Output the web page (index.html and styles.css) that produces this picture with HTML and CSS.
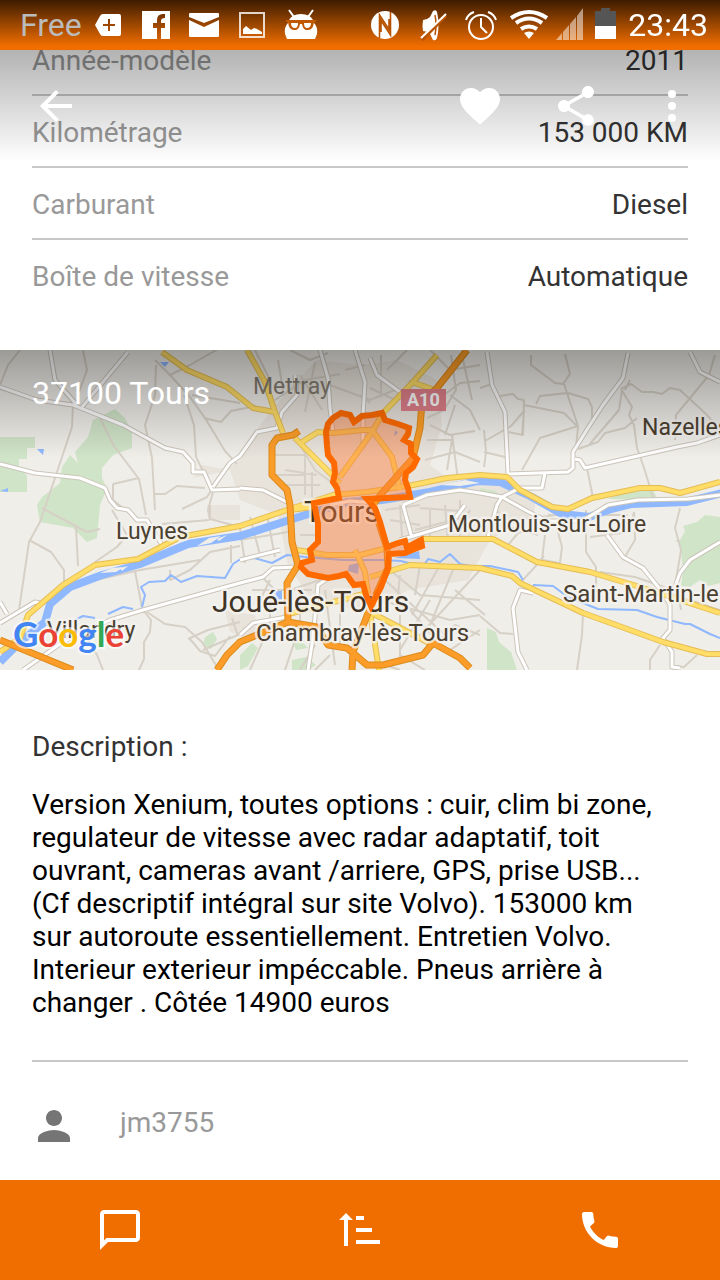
FILE: index.html
```html
<!DOCTYPE html>
<html lang="fr">

<head>
    <meta charset="UTF-8">
    <meta name="viewport" content="width=device-width, initial-scale=1.0">
    <title>Annonce - 37100 Tours</title>
    <link rel="stylesheet" href="styles.css">
</head>

<body>
    <div class="overlay">
        <div class="status-bar">
            <span class="carrier">Free</span>
            <svg class="status-icon" viewBox="0 0 48 50"><path fill="#fff" fill-rule="evenodd" d="M11 25l5-9q1-2 3-2h16q2 0 2 2v18q0 2-2 2H19q-2 0-3-2zM24 19v5h-5v2h5v5h2v-5h5v-2h-5v-5z"/></svg>
            <svg class="status-icon" viewBox="0 0 48 50"><path fill="#fff" fill-rule="evenodd" d="M10 11h28v28H10zM25 39h4V28h4v-5h-4v-2q0-3 4-3v-4h-2q-6 0-6 6v3h-4v5h4z"/></svg>
            <svg class="status-icon" viewBox="0 0 48 50"><path fill="#fff" d="M10 13h28q1 0 1 1v3l-15 6-15-6v-3q0-1 1-1zM9 20l15 7 15-7v16q0 1-1 1H10q-1 0-1-1z"/></svg>
            <svg class="status-icon" viewBox="0 0 48 50"><path fill="none" stroke="#fff" stroke-opacity=".8" stroke-width="2" d="M12 13h24v24H12z"/><path fill="#fff" d="M15 34v-5l3-3 5 4 3-2 3 1 5 3v2z"/></svg>
            <svg class="status-icon" viewBox="0 0 48 50"><path fill="none" stroke="#fff" stroke-width="2" d="M13 10l5 7M37 10l-5 7"/><path fill="#fff" d="M13 20q3-6 12-6t12 6l1 3q4 4 3 11l-2 5H11l-2-5q-1-7 3-11z"/><path fill="#c05800" d="M10 20h30v2h-2q-1 9-7 8-4 0-5-6h-2q-1 6-5 6-6 1-7-8h-2z"/><path fill="#fff" d="M15 23h7q0 5-3 5-4 0-4-5zM28 23h7q0 5-4 5-3 0-3-5z"/></svg>
            <div class="status-right">
                <svg class="status-icon" viewBox="0 0 48 50"><circle cx="25" cy="25" r="14" fill="#fff"/><path fill="none" stroke="#b75200" stroke-width="1.600" d="M19.500 38V15l9.500 14.500V19M30.500 12v23L21 20.500V32"/></svg>
                <svg class="status-icon" viewBox="0 0 48 50"><path fill="#fff" d="M15 20q4 0 7-3l3-6q3-2 4 1 3 13 0 26-1 3-4 2l-3-6q-3-3-7-3-1-5 0-11z"/><path stroke="#b85200" stroke-width="1.500" d="M27 15q2 10 0 20" fill="none"/><path stroke="#b85200" stroke-width="3" d="M14 40l24-24"/><path stroke="#fff" stroke-width="2" d="M13 38l25-24"/></svg>
                <svg class="status-icon" viewBox="0 0 48 50"><g fill="none" stroke="#fff" stroke-width="2"><circle cx="25" cy="27" r="12"/><path d="M25 18v9l6 6M10 20q2-6 8-8M32 12q6 2 8 8"/></g></svg>
                <svg class="status-icon" viewBox="0 0 48 50"><g fill="none" stroke="#fff" stroke-width="4"><path d="M7 18q18-12 36 0"/><path d="M12 23q13-9 26 0"/><path d="M17 29q8-5 16 0"/></g><path fill="#fff" d="M20 33q5-3 10 0l-5 6z"/></svg>
                <svg class="signal-icon" viewBox="0 0 32 50"><path fill="#fff" fill-opacity=".5" d="M4 40l6-7v7zM11 32l6-7v15h-6zM18 24l6-7v23h-6zM25 16l6-8v32h-6z"/></svg>
                <svg class="battery-icon" viewBox="0 0 26 50"><path fill="#555" d="M8 8h9v3h6v15H2V11h6z"/><path fill="#fff" d="M2 26h21v13H2z"/></svg>
                <time>23:43</time>
            </div>
        </div>
        <nav class="toolbar">
            <button class="icon-button" aria-label="Retour"><svg viewBox="0 0 24 24"><path d="M20 11H7.8l5.6-5.6L12 4l-8 8 8 8 1.4-1.4L7.8 13H20z"/></svg></button>
            <div class="toolbar-actions">
                <button class="icon-button" aria-label="Ajouter aux favoris"><svg viewBox="0 0 24 24"><path d="M12 21.35l-1.45-1.32C5.4 15.36 2 12.28 2 8.5 2 5.42 4.42 3 7.5 3c1.74 0 3.41.81 4.5 2.09C13.09 3.81 14.76 3 16.5 3 19.58 3 22 5.42 22 8.5c0 3.78-3.4 6.86-8.55 11.54z"/></svg></button>
                <button class="icon-button" aria-label="Partager"><svg viewBox="0 0 24 24"><path d="M18 16.08c-.76 0-1.44.3-1.96.77L8.91 12.7c.05-.23.09-.46.09-.7s-.04-.47-.09-.7l7.05-4.11c.54.5 1.25.81 2.04.81 1.66 0 3-1.34 3-3s-1.34-3-3-3-3 1.34-3 3c0 .24.04.47.09.7L8.04 9.81C7.5 9.31 6.79 9 6 9c-1.66 0-3 1.34-3 3s1.34 3 3 3c.79 0 1.5-.31 2.04-.81l7.12 4.16c-.05.21-.08.43-.08.65 0 1.61 1.31 2.92 2.92 2.92s2.92-1.31 2.92-2.92-1.31-2.92-2.92-2.92z"/></svg></button>
                <button class="icon-button" aria-label="Plus d'options"><svg viewBox="0 0 24 24"><circle cx="12" cy="6" r="2"/><circle cx="12" cy="12" r="2"/><circle cx="12" cy="18" r="2"/></svg></button>
            </div>
        </nav>
    </div>

    <main>
        <dl class="specs">
            <div class="spec"><dt>Année-modèle</dt><dd>2011</dd></div>
            <div class="spec"><dt>Kilométrage</dt><dd>153 000 KM</dd></div>
            <div class="spec"><dt>Carburant</dt><dd>Diesel</dd></div>
            <div class="spec"><dt>Boîte de vitesse</dt><dd>Automatique</dd></div>
        </dl>

        <section class="map">
            <svg class="map-canvas" viewBox="0 350 720 320" preserveAspectRatio="xMidYMid slice">
                <rect class="land" y="350" width="720" height="320"/>

                <!-- built-up areas -->
                <path class="urban" d="M193 478l30-6 17-12 20-35 32-40 25-25 45 5 35-5 40 20 5 45-12 40 20 15 60 5 25 10v15l-45 30-22 40-60 10-40 25-60-20-20-30-10-50-38-15-10-30-27-5zM207 505h33v15h-30zM505 505h22l8 14h-32zM225 610l30 5 5 25-30-8z"/>

                <!-- woods -->
                <path class="wood" d="M0 437h35v11h-8v11h-8v10l8 6v17H0zM115 409l10 9 7 14v16l-19 7-11 13v10l5 10-7 17-3 33-10 4-14-14-33-6-3-17 5-8 18-14 2-16 8-12 8 8-3-11 13-15 5-17zM697 522l8-7 15 2v66l-12 3-8-6-10 7-9-1 2-16-3-26-5-4h5l5-9-2-5zM487 628l9 4 3 10 12 10 6 18h-30zM205 637l8-5 4 7-6 10-8-4zM240 655l12-12 6 5-10 18-8 4zM290 637l10 3 8 8-12 2zM292 660l14-3 10 8-8 5h-16zM480 488l15 3 8 6-23-2zM607 499l20-7 26-2 5 10z"/>

                <!-- small roads -->
                <g class="lane">
                    <path d="M0 385l8-20 12-15M83 350l4 20-8 22M73 405l-1 22-14 42-18 53-11 20-10 68M100 418l14 28 25 33 7 36M156 365l-1 30-10 30 7 33 3 52M155 360l15 15 20 22 15 21 20 33 12 13M170 375l20-10 35-20M204 418l17 4 10-11 25-5M184 395l10 30 2 32 10 20M192 395l48 8"/>
                    <path d="M113 484l26-6M113 484v16l15 12M155 494h10l12-8 28 2M182 509l25-12 5-8M213 492l-5 18 2 10M42 508l45 24 13-3M76 526l2 40M29 540l22 12 13 18v14M95 562l22-15 10-12-15-25M162 524l47-4M210 505v14l30 8M135 571l8 42M52 605l12-12 18-10 58-13 60-10M170 570v10l20-10 20-18 30-6M231 545v18"/>
                    <path d="M143 610l8 10-1 12-6 10v17l-5 11M147 612l18 12 20 3 17 15 15 25M188 639l20-9 32-8M203 650l37-16M82 630l15 25 6 15M190 639l10 12 15 5 15-20M232 618l6 18"/>
                    <path d="M255 350l15 30M290 350l20 10 18-7M275 400l30-20 35-6M283 390l-5-30M300 375l22 35M315 362l-10 50M330 385l40 15 25-10M381 355v40M345 370l20-5M387 370l20-20M395 400l-25-12M410 380l-5 20 15 10M360 395l10 8M440 398l20-15 20-2M427 418l17-8 12-20-5-35M450 395l20 15 10 20M430 425l20 10 25-4M427 440h25l-5 30M455 405l-10 30M425 460l30-8 25 10M452 435l6 45M430 350l20 20 30-5M462 355l10 45"/>
                    <path d="M480 388l12-4M500 396l13-2 5 5 6 1-1 35-15-3M485 441l26-15 13-15-2 24M524 405l40 8 14 14-2 20M522 470l18-32 38-12M531 355v10l24 18 8 1 7-10-5-20M564 384l14 42M536 404l4-8 28-3 20 6 4 8v12M621 389l11 18-3 8 5 10 3 23 6 17 12 38M621 389l10-5 11 8h11l9 2 8-6 10 2 25 23 15 16M622 390l-3 20-30 35M578 449l20-7 7-9 20-5 12-10M675 440l1-25 33-40 6-20M484 430l2 22-2 15M484 452l25 6M587 468l6 30M625 390l5-10"/>
                    <path d="M545 535l-3 25 18 3 2-16-4-15M508 545l10-12 22-6M586 510v42l10 15v20l-5 13M590 537l40-5 4-20M634 512l1 28-12 20M680 508l-5 20 6 22-5 30 5 30M520 583l14-15 10-12M480 616l20 17 13 1M583 613l-1 22-5 35M600 572l35 5 35 12M660 645l-10 15v10M697 655l-13 12-10-1M500 520l35-2 20-3M495 505l8 20 35 10M548 515h80"/>
                    <path d="M275 455h30v20h-30M300 445l15 25M285 470l32 5M285 485h35M305 470v25M312 472v25M315 470l20 15M297 520l20-8M300 535h17M280 510l-40 18 5 35M250 517l10 38M267 515l8 42M240 540l48-8M385 510l35-5M390 520l30 5M400 505l2 32M420 508l40 3M415 530l50-13M430 510v29M445 505l3 35M460 500v42M470 510l-10 20M390 570l30 25 60 5M400 575l-3 30M420 565l-5 30M440 565l-28 50M455 565l-25 60M480 570l-60 65M385 580l60 55M380 600l70 20 30-5M400 615v45M410 610l30 35M430 600l-30 50M455 590l30 25M260 575l20 20M252 590h60M260 600l10-20M270 595v35M290 590l30-10M300 590v35M325 590l10 75M340 590v60M300 625l-15 45M270 625l-20 45M320 600h50M315 645l-15 25M330 655l-15 15M385 665l15 5M400 655l25 15M440 640l15-15 25 10M450 650l30-20"/>
                </g>

                <!-- rivers -->
                <path class="river river-wide" d="M0 662l20-20 25-20 5-18 20-17 32-12 38-11 48-20 52-8 62-20 45-14 35-2 48-8 47-11 23 1 30 14 32 18 27 3 22-8 20-5 55-2 57-14"/>
                <path class="river" d="M142 607l3-12-4-8 8-5 16-1 6-6 10 7 16-6 28 2 8-14 6-4 15-2 18 5 15-8 18 2 38 3h40l18 1 22 6 5-8 12 3 10-8 10 10 10 2h20l28 6 5 8M533 585l20 1 15 11 30 12 39 1 20 7 28 7h5l20 10 10 4M75 620l8-4 12 2M108 614l15-7 10 2"/>
                <path class="water" d="M37 449h7l-1 6zM0 491l8-3v4zM160 362h9l-4 5zM276 591h6v9h-7zM349 565l10-2-1 11-10-3zM394 558l25-7 1 8zM395 430l3 3-4 3z"/>
                <path class="island" d="M100 573l12-5 12-1-8 5zM120 568l8-2-6 5zM197 546l12-8 12-2-10 7zM217 539l10-4-8 6zM440 485l25-5 15 3-20 3z"/>

                <!-- white roads, cased then filled -->
                <defs>
                    <g id="streets">
                        <path d="M0 387l37 13 36 5 50 20 42 23 18 4 10 11v9h11l8 18 28-1M213 487l17-24 10-7 17-24 20-4 5-16 15-17-2-20M50 350l5 30 22 25M128 352l-46 55M0 464l35 9 45 5 25 10 5 12 7 8 11 2 9 10h10l15 25"/>
                        <path d="M320 350l8 28 2 30 3 25M355 350l10 32-2 33v32M370 358l7 17 23 17 28 7M240 488l23 2 24 12M403 505l24-10 33-5 20 3 22 4 25 14 20 10h35l26-16 30-5 50-1 55-7M403 505l9 33M400 540l50-15 15-20M330 505l20-4 25 2"/>
                        <path d="M487 352l5 33 13 27 3 62 60-2 5-4v-16l15-24 15-23 20-27 5-25M575 459l5 1 5 8 92-21 20-4 23-8M690 352l10 20 20 10M545 473l-3 15h-22l-18 9-5 8-9 32M607 535l16 22 20 11 20 25 7 12v25l-7 8 9 14v15l8 1M673 592l7-19 10-13 30-18M533 593l-13-3-7 18 5 44 9 18M670 595l50 17"/>
                        <path d="M0 623l35-21 5 1M0 602l7 12M23 670l40-28 47-22 33-10 97-27 23-6 10-9 25-1M240 635l13-12 34-6M308 670l5-32 5-53 12-8M240 560l40-10"/>
                    </g>
                    <g id="avenues">
                        <path d="M162 352l25 18 40 17 26 21 22 4 8 21M247 350l18 32 10 30M0 652l20-14 8-23 35-30 32-20 43-6 42-22 60-11 47-16 46-15 34-3 46-7 34-7 33-3 27 2 13 13 32 17 16 2 24-11 48-10h20l20 5 40-11"/>
                        <path d="M295 438l45 45M302 442l16-10 15 1 30-3h9l20 27 8 33M372 432l-32 45M372 432l11-19 30-31 24-27M412 382l20 7M422 539h71l44 23 53 10 50 15 80 26M370 577l40-12 70 3 32 8 8 7 63 30 80 29 44 12h13M285 615l82-22M297 550l30 5h33l27-7M355 550l10 22 5 36M370 612l9 58M370 612l63 33M290 510l23-3"/>
                    </g>
                    <g id="motorways">
                        <path d="M299 431l-6 4-16 3-5 7v30l15 15 3 15 2 37 6 23-11 18 1 39 29 5 11 18 19 3 20 17h16l40-10 10-12 27 15 10 10M288 622l-48 20-13 13-10 15M0 640l73 30M467 350l-30 38-15 14-2 26-7 30-30 34-10 13 14 43 1 20-18 40-17 44-1 18"/>
                    </g>
                </defs>
                <use href="#streets" class="street-case"/>
                <use href="#streets" class="street"/>
                <use href="#avenues" class="avenue-case"/>
                <use href="#avenues" class="avenue"/>
                <use href="#motorways" class="motorway-case"/>
                <use href="#motorways" class="motorway"/>

                <g class="town">
                    <text class="faded" x="253" y="394">Mettray</text>
                    <text x="642" y="435">Nazelles</text>
                    <text x="116" y="539">Luynes</text>
                    <text x="448" y="532">Montlouis-sur-Loire</text>
                    <text class="suburb" x="563" y="602">Saint-Martin-le</text>
                    <text x="47" y="638">Villandry</text>
                    <text class="suburb" x="256" y="641">Chambray-lès-Tours</text>
                    <text class="city" x="304" y="522">Tours</text>
                    <text class="city" x="212" y="612">Joué-lès-Tours</text>
                </g>

                <rect x="401" y="389" width="45" height="22" fill="#e0808a"/>
                <text class="road-number" x="407" y="406">A10</text>

                <!-- boundary of the postcode -->
                <path class="zone" d="M339 498L337 488 333 482 335 473 334 463 328 455 327 446 326 432 328 424 333 418 341 413 350 415 354 422 362 416 372 415 382 413 385 420 398 424 409 428 408 434 404 440 411 444 411 453 417 459 413 467 406 473 405 480 408 488 410 497 367 499 375 508 380 522 387 547 398 543 405 541 407 548 413 544 421 540 422 546 412 550 405 553 389 554 388 568 381 587 371 606 366 595 363 584 354 585 349 578 346 574 339 576 328 578 318 576 308 574 301 567 302 563 312 560 310 550 318 542 318 524 314 503z"/>

                <text class="google" x="13" y="647"><tspan fill="#4285f4">G</tspan><tspan fill="#ea4335">o</tspan><tspan fill="#fbbc05">o</tspan><tspan fill="#4285f4">g</tspan><tspan fill="#34a853">l</tspan><tspan fill="#ea4335">e</tspan></text>
            </svg>
            <h2 class="map-title">37100 Tours</h2>
        </section>

        <section class="description">
            <h2>Description :</h2>
            <p>Version Xenium, toutes options : cuir, clim bi zone, regulateur de vitesse avec radar adaptatif, toit ouvrant, cameras avant /arriere, GPS, prise USB... (Cf descriptif intégral sur site Volvo). 153000 km sur autoroute essentiellement. Entretien Volvo. Interieur exterieur impéccable. Pneus arrière à changer . Côtée 14900 euros</p>
        </section>

        <section class="seller">
            <svg class="avatar" viewBox="4 0 16 20"><path d="M12 12c2.21 0 4-1.79 4-4s-1.79-4-4-4-4 1.79-4 4 1.79 4 4 4zm0 2c-2.67 0-8 1.34-8 4v2h16v-2c0-2.66-5.33-4-8-4z"/></svg>
            <span>jm3755</span>
        </section>
    </main>

    <nav class="bottom-bar">
        <button class="icon-button" aria-label="Message"><svg viewBox="0 0 24 24"><path d="M20 2H4c-1.1 0-2 .9-2 2v18l4-4h14c1.1 0 2-.9 2-2V4c0-1.1-.9-2-2-2zm0 14H5.200L4 17.200V4h16z"/></svg></button>
        <button class="icon-button" aria-label="Trier"><svg viewBox="0 0 48 48"><path d="M3 14l7-7 7 7h-5v26H8V14zM20 10h8v4h-8zM20 22h16v4H20zM20 34h24v4H20z"/></svg></button>
        <button class="icon-button" aria-label="Appeler"><svg viewBox="0 0 24 24"><path d="M20.010 15.380c-1.230 0-2.420-.2-3.530-.56-.35-.12-.74-.03-1.010.24l-1.570 1.970c-2.830-1.350-5.480-3.900-6.890-6.830l1.950-1.660c.27-.28.35-.67.24-1.020-.37-1.110-.56-2.300-.56-3.530 0-.54-.45-.99-.99-.99H4.190C3.650 3 3 3.240 3 3.990 3 13.280 10.730 21 20.010 21c.71 0 .99-.63.99-1.180v-3.450c0-.54-.45-.99-.99-.99z"/></svg></button>
    </nav>
</body>

</html>
```
FILE: styles.css
```css
* {
    box-sizing: border-box;
}

body {
    margin: 0;
    min-height: 100vh;
    display: flex;
    flex-direction: column;
    font-family: Roboto, "Liberation Sans", sans-serif;
    font-size: 28px;
    line-height: 33px;
    color: #333;
    background: #fff;
}

h2,
p,
dl,
dd {
    margin: 0;
}

h2 {
    font-size: 28px;
    font-weight: normal;
}

button {
    border: none;
    padding: 0;
    background: none;
    cursor: pointer;
}

/* status bar and toolbar stay above the scrolled content */
.overlay {
    position: fixed;
    top: 0;
    left: 0;
    right: 0;
    z-index: 2;
    background: linear-gradient(rgba(0, 0, 0, 0.43), rgba(0, 0, 0, 0));
}

.status-bar {
    display: flex;
    align-items: center;
    height: 50px;
    padding: 0 12px 0 20px;
    font-size: 32px;
    color: #fff;
    background: linear-gradient(rgba(0, 0, 0, 0.75), rgba(0, 0, 0, 0) 92%), #f06d00;
}

.carrier {
    width: 64px;
    color: #bbb;
}

.status-icon {
    width: 48px;
    height: 50px;
}

.signal-icon {
    width: 32px;
    height: 50px;
}

.battery-icon {
    width: 26px;
    height: 50px;
    margin: 0 9px;
}

.status-right {
    display: flex;
    align-items: center;
    margin-left: auto;
}

.toolbar {
    display: flex;
    align-items: center;
    justify-content: space-between;
    height: 112px;
    padding: 0 24px 0 32px;
}

.toolbar-actions {
    display: flex;
    gap: 48px;
}

.icon-button,
.icon-button svg {
    display: block;
    height: 48px;
    fill: #fff;
}

.icon-button svg {
    width: 48px;
    margin: 0 auto;
}

.specs {
    padding: 24px 32px 38px;
}

.spec {
    display: flex;
    justify-content: space-between;
    align-items: center;
    height: 72px;
    padding-top: 2px;
    border-bottom: 2px solid #c7c7c7;
}

.spec:last-child {
    border-bottom-color: transparent;
}

.spec dt {
    color: #999;
}

.map {
    position: relative;
    height: 320px;
}

.map::after {
    content: "";
    position: absolute;
    inset: 0 0 auto;
    height: 108px;
    background: linear-gradient(rgba(0, 0, 0, 0.35), rgba(0, 0, 0, 0));
}

.map-canvas {
    display: block;
    width: 100%;
    height: 100%;
}

.map-title {
    position: absolute;
    top: 27px;
    left: 32px;
    z-index: 1;
    font-size: 32px;
    color: #fff;
}

.land,
.island {
    fill: #f0eee9;
}

.urban {
    fill: #e8e3db;
}

.wood {
    fill: #d0e4c8;
}

.water {
    fill: #8fb8ff;
}

.lane,
.river,
.street,
.street-case,
.avenue,
.avenue-case,
.motorway,
.motorway-case {
    fill: none;
    stroke-linejoin: round;
}

.lane {
    stroke: #d6d0c6;
    stroke-width: 2;
}

.river {
    stroke: #8fb8ff;
    stroke-width: 2;
}

.river-wide {
    stroke-width: 8;
}

.street-case {
    stroke: #cbc4b9;
    stroke-width: 5;
}

.street {
    stroke: #fff;
    stroke-width: 3;
}

.avenue-case {
    stroke: #e5bd55;
    stroke-width: 6;
}

.avenue {
    stroke: #ffdd66;
    stroke-width: 4;
}

.motorway-case {
    stroke: #dd8a1c;
    stroke-width: 7;
}

.motorway {
    stroke: #fb9d28;
    stroke-width: 5;
}

.town {
    font-size: 23px;
    fill: #4a4030;
    stroke: rgba(245, 243, 239, 0.8);
    stroke-width: 5px;
    stroke-linejoin: round;
    paint-order: stroke;
}

.faded {
    fill: #857e72;
    stroke: none;
}

.suburb {
    font-size: 24px;
}

.city {
    font-size: 30px;
    fill: #403426;
}

.road-number {
    font-size: 18px;
    font-weight: bold;
    fill: #fff;
}

.zone {
    fill: rgba(255, 120, 50, 0.42);
    stroke: #ff6a00;
    stroke-width: 6;
}

.google {
    font-family: Lato, sans-serif;
    font-size: 35px;
    font-weight: bold;
    stroke: rgba(255, 255, 255, 0.6);
    stroke-width: 4px;
    paint-order: stroke;
}

.description {
    margin: 0 32px;
    padding: 60px 0 41px;
    border-bottom: 2px solid #c7c7c7;
}

.description p {
    margin-top: 25px;
    padding-right: 16px;
    color: #000;
}

.seller {
    display: flex;
    align-items: center;
    gap: 44px;
    height: 118px;
    padding: 2px 32px 0;
    color: #999;
}

.avatar {
    width: 44px;
    height: 40px;
    fill: #757575;
}

.bottom-bar {
    position: sticky;
    bottom: 0;
    display: grid;
    grid-template-columns: repeat(3, 1fr);
    align-items: center;
    height: 100px;
    margin-top: auto;
    background: #f06d00;
}
```
